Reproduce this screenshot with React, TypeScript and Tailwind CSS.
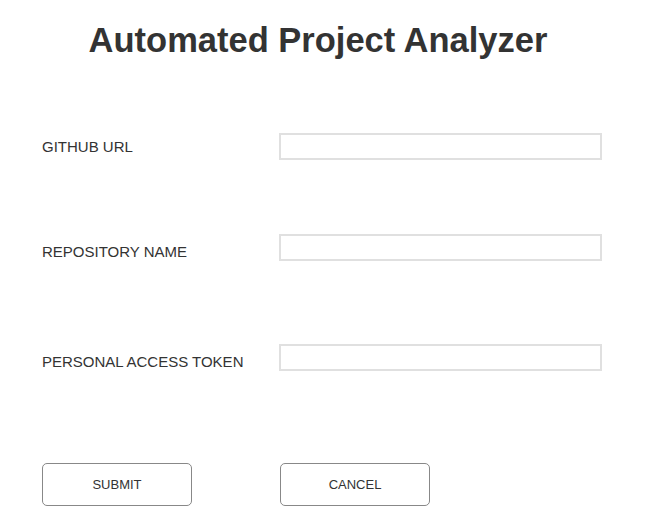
import React from "react";

const Field = ({ label, className, labelClass }: { label: string; className?: string; labelClass?: string }) => {
  return (
    <div className={"flex items-start " + (className ?? "")}>
      <label className={"w-[237px] text-[15px] leading-[17px] text-[#333] " + (labelClass ?? "")}>{label}</label>
      <input
        type="text"
        className="w-[323px] h-[27px] border-2 border-[#e0e0e0] bg-white focus:outline-none"
      />
    </div>
  );
};

export default function App() {
  return (
    <div className="w-[650px] h-[522px] bg-white font-['Liberation_Sans',Arial,sans-serif] pl-[42px]">
      <h1 className="pt-[20px] w-[552px] text-center text-[34.5px] leading-[40px] font-bold text-[#333]">
        Automated Project Analyzer
      </h1>
      <form className="flex flex-col" onSubmit={(e) => e.preventDefault()}>
        <Field label="GITHUB URL" className="mt-[73px]" labelClass="mt-[5px]" />
        <Field label="REPOSITORY NAME" className="mt-[74px]" labelClass="mt-[9px]" />
        <Field label="PERSONAL ACCESS TOKEN" className="mt-[83px]" labelClass="mt-[9px]" />
        <div className="flex gap-[88px] mt-[92px]">
          <button
            type="submit"
            className="w-[150px] h-[43px] rounded-[5px] border border-[#888] bg-white text-[13px] text-[#333]"
          >
            SUBMIT
          </button>
          <button
            type="button"
            className="w-[150px] h-[43px] rounded-[5px] border border-[#888] bg-white text-[13px] text-[#333]"
          >
            CANCEL
          </button>
        </div>
      </form>
    </div>
  );
}
